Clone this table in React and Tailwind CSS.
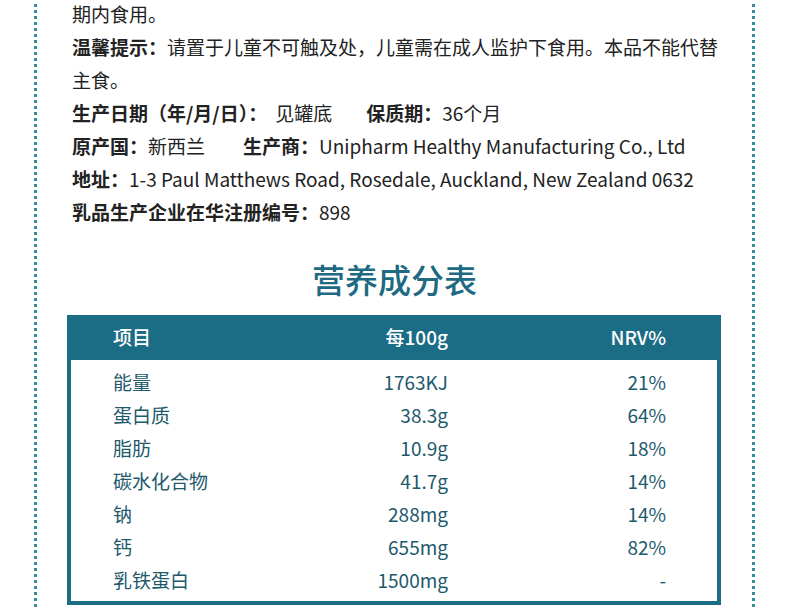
import React from "react";

const rows = [
  ["能量", "1763KJ", "21%"],
  ["蛋白质", "38.3g", "64%"],
  ["脂肪", "10.9g", "18%"],
  ["碳水化合物", "41.7g", "14%"],
  ["钠", "288mg", "14%"],
  ["钙", "655mg", "82%"],
  ["乳铁蛋白", "1500mg", "-"],
];

export default function App() {
  return (
    <div
      className="w-[790px] h-[608px] overflow-hidden bg-white pl-[34px]"
      style={{ fontFamily: '"Noto Sans CJK SC", "Noto Sans", sans-serif' }}
    >
      <div className="w-[721px] h-[640px] border-l-[3px] border-r-[3px] border-dotted border-[#3b8b9b]">
        <div className="-mt-[3px] pl-[35px] pr-[30px] text-[19px] leading-[33px] text-[#222222]">
          <div>期内食用。</div>
          <div>
            <span className="font-bold">温馨提示：</span>请置于儿童不可触及处，儿童需在成人监护下食用。本品不能代替主食。
          </div>
          <div className="flex">
            <span className="font-bold">生产日期（年/月/日）：</span>
            <span className="ml-[8px] w-[91px]">见罐底</span>
            <span className="font-bold">保质期：</span>
            <span>36个月</span>
          </div>
          <div className="flex">
            <span className="font-bold">原产国：</span>
            <span className="w-[95px]">新西兰</span>
            <span className="font-bold">生产商：</span>
            <span>Unipharm Healthy Manufacturing Co., Ltd</span>
          </div>
          <div>
            <span className="font-bold">地址：</span>1-3 Paul Matthews Road, Rosedale, Auckland, New Zealand 0632
          </div>
          <div>
            <span className="font-bold">乳品生产企业在华注册编号：</span>898
          </div>
        </div>

        <div className="mt-[31px] text-center text-[33px] leading-[40px] font-medium text-[#1d6a82]">
          营养成分表
        </div>

        <div className="mt-[16px] ml-[30px] w-[654px] border-x-4 border-b-4 border-[#1b6c85]">
          <div className="flex h-[45px] items-center bg-[#1b6c85] pl-[42px] text-[19px] font-medium text-white">
            <div className="w-[200px]">项目</div>
            <div className="w-[135px] text-right">每100g</div>
            <div className="w-[218px] text-right">NRV%</div>
          </div>
          <div className="pt-[5px] pb-[5px] pl-[42px] text-[19px] leading-[33px] text-[#21596c]">
            {rows.map(([a, b, c]) => (
              <div key={a} className="flex">
                <div className="w-[200px]">{a}</div>
                <div className="w-[135px] text-right">{b}</div>
                <div className="w-[218px] text-right">{c}</div>
              </div>
            ))}
          </div>
        </div>
      </div>
    </div>
  );
}
